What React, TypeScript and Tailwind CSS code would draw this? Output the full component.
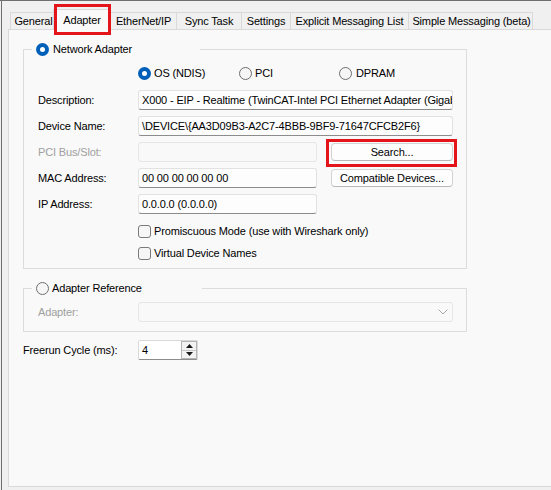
import React from "react";

function Radio({ checked }: { checked?: boolean }) {
  return checked ? (
    <span className="flex h-[13px] w-[13px] shrink-0 items-center justify-center rounded-full bg-[#005fb8]">
      <span className="h-[5px] w-[5px] rounded-full bg-white" />
    </span>
  ) : (
    <span className="h-[13px] w-[13px] shrink-0 rounded-full border border-[#6e6e6e] bg-[#f6f6f6]" />
  );
}

function Check() {
  return <span className="h-[13px] w-[13px] shrink-0 rounded-[3px] border border-[#7a7a7a] bg-[#f6f6f6]" />;
}

function Field({ wide, children }: { wide?: boolean; children?: React.ReactNode }) {
  return (
    <div
      className={
        wide
          ? "flex h-[20px] w-[315px] items-center overflow-hidden whitespace-nowrap rounded-[3px] border border-[#e2e2e2] border-b-[#8c8c8c] bg-[#fdfdfd] pl-[3px]"
          : "flex h-[20px] w-[179px] items-center overflow-hidden whitespace-nowrap rounded-[3px] border border-[#e2e2e2] border-b-[#8c8c8c] bg-[#fdfdfd] pl-[3px]"
      }
    >
      {children}
    </div>
  );
}

function Btn({ children }: { children: React.ReactNode }) {
  return (
    <div className="ml-[14px] flex h-[18px] w-[122px] items-center justify-center rounded-[4px] border border-[#d3d3d3] border-b-[#b8b8b8] bg-[#fdfdfd]">
      {children}
    </div>
  );
}

export default function App() {
  return (
    <div className="relative flex h-[490px] w-[551px] overflow-hidden border-t border-[#6f6f6f] bg-[#f0f0f0] font-['Liberation_Sans',Arial,sans-serif] text-[11px] tracking-[-0.15px] text-black">
      <div className="w-px" />
      <div className="w-px bg-[#6f6f6f]" />
      <div className="flex min-w-0 flex-1 flex-col">
        {/* Tabs */}
        <div className="relative z-10 flex h-[28px] items-end pl-[8px]">
          <div className="flex h-[17px] w-[43px] items-center justify-center border-l border-t border-[#d9d9d9] pl-[3px]">General</div>
          <div className="mb-[-1px] flex h-[21px] w-[58px] items-center justify-center border-l border-r border-t border-[#d9d9d9] bg-[#f9f9f9]">
            Adapter
          </div>
          <div className="flex h-[17px] w-[65px] items-center justify-center border-t border-[#d9d9d9]">EtherNet/IP</div>
          <div className="flex h-[17px] w-[65px] items-center justify-center border-l border-t border-[#d9d9d9]">Sync Task</div>
          <div className="flex h-[17px] w-[49px] items-center justify-center border-l border-t border-[#d9d9d9]">Settings</div>
          <div className="flex h-[17px] w-[118px] items-center justify-center border-l border-t border-[#d9d9d9]">
            Explicit Messaging List
          </div>
          <div className="flex h-[17px] w-[125px] items-center justify-center border-l border-r border-t border-[#d9d9d9] pl-[2px]">
            Simple Messaging (beta)
          </div>
        </div>

        {/* Panel */}
        <div className="ml-[6px] flex h-[458px] flex-col border-b border-l border-t border-[#d9d9d9] bg-[#f9f9f9] pl-[14px] pt-[12px]">
          {/* Network Adapter group */}
          <fieldset className="w-[444px] border border-[#dcdcdc] p-0">
            <legend className="ml-[8px] flex h-[14px] w-[168px] items-center gap-[4px] pl-[4px]">
              <Radio checked />
              <span>Network Adapter</span>
            </legend>
            <div className="flex flex-col pb-[8px] pl-[14px] pr-[12px]">
              <div className="ml-[100px] mt-[11px] flex h-[13px] items-center">
                <div className="flex w-[101px] items-center gap-[3px]">
                  <Radio checked />
                  <span>OS (NDIS)</span>
                </div>
                <div className="flex w-[100px] items-center gap-[3px]">
                  <Radio />
                  <span>PCI</span>
                </div>
                <div className="flex items-center gap-[4px]">
                  <Radio />
                  <span>DPRAM</span>
                </div>
              </div>

              <div className="mt-[10px] flex h-[20px] items-center">
                <span className="w-[100px]">Description:</span>
                <Field wide>X000 - EIP - Realtime (TwinCAT-Intel PCI Ethernet Adapter (Gigabit)</Field>
              </div>
              <div className="mt-[6px] flex h-[20px] items-center">
                <span className="w-[100px]">Device Name:</span>
                <Field wide>\DEVICE\{"{"}AA3D09B3-A2C7-4BBB-9BF9-71647CFCB2F6{"}"}</Field>
              </div>
              <div className="mt-[6px] flex h-[20px] items-center">
                <span className="w-[100px] text-[#a0a0a0]">PCI Bus/Slot:</span>
                <div className="h-[20px] w-[179px] rounded-[3px] border border-[#e6e6e6] bg-[#f9f9f9]" />
                <Btn>Search...</Btn>
              </div>
              <div className="mt-[6px] flex h-[20px] items-center">
                <span className="w-[100px]">MAC Address:</span>
                <Field>00 00 00 00 00 00</Field>
                <Btn>Compatible Devices...</Btn>
              </div>
              <div className="mt-[6px] flex h-[20px] items-center">
                <span className="w-[100px]">IP Address:</span>
                <Field>0.0.0.0 (0.0.0.0)</Field>
              </div>

              <div className="ml-[100px] mt-[11px] flex h-[13px] items-center gap-[3px]">
                <Check />
                <span>Promiscuous Mode (use with Wireshark only)</span>
              </div>
              <div className="ml-[100px] mt-[9px] flex h-[13px] items-center gap-[3px]">
                <Check />
                <span>Virtual Device Names</span>
              </div>
            </div>
          </fieldset>

          {/* Adapter Reference group */}
          <fieldset className="mt-[12px] w-[444px] border border-[#dcdcdc] p-0">
            <legend className="ml-[8px] flex h-[14px] w-[170px] items-center gap-[3px] pl-[4px]">
              <Radio />
              <span>Adapter Reference</span>
            </legend>
            <div className="flex flex-col pb-[9px] pl-[14px] pr-[12px]">
              <div className="mt-[7px] flex h-[20px] items-center">
                <span className="w-[100px] text-[#a0a0a0]">Adapter:</span>
                <div className="flex h-[20px] w-[315px] items-center justify-end rounded-[3px] border border-[#e6e6e6] bg-[#f9f9f9] pr-[4px]">
                  <svg width="10" height="6" viewBox="0 0 10 6">
                    <polyline points="0.5,0.5 5,5 9.5,0.5" fill="none" stroke="#a8a8a8" strokeWidth="1" />
                  </svg>
                </div>
              </div>
            </div>
          </fieldset>

          {/* Freerun */}
          <div className="mt-[8px] flex h-[20px] items-center">
            <span className="w-[115px]">Freerun Cycle (ms):</span>
            <div className="flex h-[20px] w-[60px] items-stretch rounded-[2px] border border-[#d9d9d9] border-b-[#8c8c8c] bg-white">
              <span className="flex flex-1 items-center pl-[3px]">4</span>
              <div className="flex w-[16px] flex-col border border-[#b4b4b4] bg-[#f3f3f3]">
                <div className="flex flex-1 items-center justify-center border-b border-[#c8c8c8]">
                  <svg width="7" height="4" viewBox="0 0 7 4">
                    <polygon points="3.5,0 7,4 0,4" fill="#1a1a1a" />
                  </svg>
                </div>
                <div className="flex flex-1 items-center justify-center">
                  <svg width="7" height="4" viewBox="0 0 7 4">
                    <polygon points="0,0 7,0 3.5,4" fill="#1a1a1a" />
                  </svg>
                </div>
              </div>
            </div>
          </div>
        </div>
      </div>

      {/* Red annotation boxes */}
      <div className="pointer-events-none absolute left-[54px] top-[3px] z-20 h-[31px] w-[57px] border-[3px] border-[#e3151b]" />
      <div className="pointer-events-none absolute left-[326px] top-[138px] z-20 h-[28px] w-[131px] border-[3px] border-[#e3151b]" />
    </div>
  );
}
